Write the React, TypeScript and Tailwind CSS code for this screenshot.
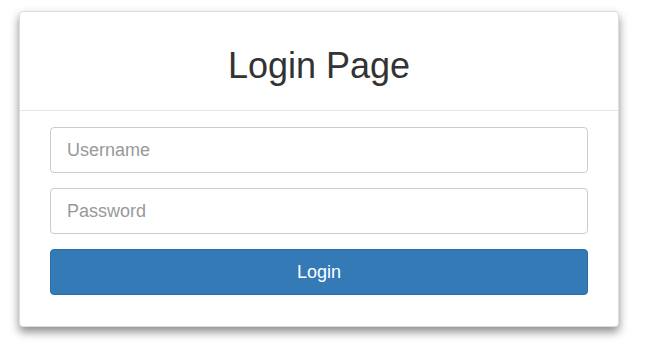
export default function App() {
  return (
    <div className="min-h-screen bg-white pt-[11px] pl-[19px]" style={{ fontFamily: '"Liberation Sans", Arial, sans-serif' }}>
      <div className="w-[600px] rounded-[4px] border border-[#dddddd] bg-white shadow-[0_5px_10px_rgba(0,0,0,0.45)]">
        <div className="h-[99px] border-b border-[#e5e5e5] pt-[36px] text-center">
          <h1 className="text-[36px] leading-[36px] text-[#333333]">Login Page</h1>
        </div>
        <form className="flex flex-col gap-[15px] px-[30px] pt-[16px] pb-[31px]">
          <input
            type="text"
            placeholder="Username"
            className="h-[46px] w-full rounded-[4px] border border-[#cccccc] px-4 text-[18px] text-[#555555] placeholder:text-[#999999] outline-none"
          />
          <input
            type="password"
            placeholder="Password"
            className="h-[46px] w-full rounded-[4px] border border-[#cccccc] px-4 text-[18px] text-[#555555] placeholder:text-[#999999] outline-none"
          />
          <button
            type="button"
            className="h-[46px] w-full rounded-[4px] border border-[#2e6da4] bg-[#337ab7] text-[18px] text-white"
          >
            Login
          </button>
        </form>
      </div>
    </div>
  )
}
